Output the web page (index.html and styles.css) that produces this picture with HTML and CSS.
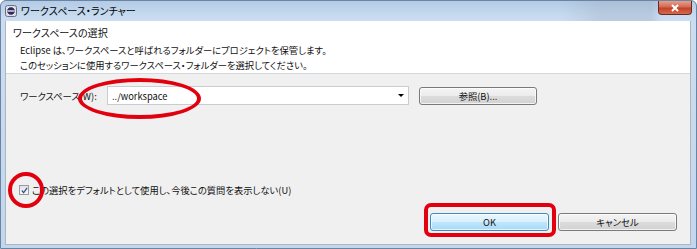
FILE: index.html
```html
<!DOCTYPE html>
<html lang="ja">
<head>
  <meta charset="UTF-8">
  <title>ワークスペース・ランチャー</title>
  <link rel="stylesheet" href="styles.css">
</head>
<body>
  <div class="window">
    <div class="titlebar">
      <svg class="app-icon" width="12" height="12" viewBox="0 0 12 12">
        <rect x="0.5" y="0.5" width="11" height="11" rx="2" fill="#d9dbe4" stroke="#6d6f80"/>
        <circle cx="6" cy="6" r="4.3" fill="#2f2a5c"/>
        <circle cx="6" cy="6" r="4.3" fill="none" stroke="#f4f4f8" stroke-width="1"/>
        <rect x="2.5" y="5.4" width="7" height="1.2" fill="#ffffff"/>
      </svg>
      <span class="title">ワークスペース・ランチャー</span>
      <div class="close-btn">
        <svg width="10" height="8" viewBox="0 0 10 8">
          <path d="M2 1 L8 7 M8 1 L2 7" stroke="#ffffff" stroke-width="2"/>
        </svg>
      </div>
    </div>

    <div class="client">
      <div class="header">
        <p class="header-title">ワークスペースの選択</p>
        <p class="header-desc">Eclipse は、ワークスペースと呼ばれるフォルダーにプロジェクトを保管します。<br>このセッションに使用するワークスペース・フォルダーを選択してください。</p>
      </div>

      <div class="body">
        <div class="ws-row">
          <span class="ws-label">ワークスペース(W):</span>
          <div class="combo">
            <span class="combo-text">../workspace</span>
            <span class="combo-arrow"></span>
          </div>
          <button class="btn browse">参照(B)...</button>
        </div>

        <label class="check-row">
          <span class="checkbox">
            <svg width="7" height="7" viewBox="0 0 8 8">
              <path d="M1 4 L3 6.5 L7 1" fill="none" stroke="#3a4f9a" stroke-width="1.4"/>
            </svg>
          </span>
          <span>この選択をデフォルトとして使用し、今後この質問を表示しない(U)</span>
        </label>

        <div class="btn-row">
          <button class="btn default">OK</button>
          <button class="btn">キャンセル</button>
        </div>
      </div>
    </div>

    <div class="mark mark-label"></div>
    <div class="mark mark-check"></div>
    <div class="mark mark-ok"></div>
  </div>
</body>
</html>
```

FILE: styles.css
```css
* { box-sizing: border-box; }
body {
  margin: 0;
  font-family: "Noto Sans CJK JP", "Noto Sans", sans-serif;
  font-size: 9.3px;
  font-feature-settings: "palt";
  color: #111;
  background: #fff;
}
p { margin: 0; }

.window {
  position: relative;
  width: 697px;
  height: 249px;
  border: 1px solid #6a84a4;
  border-radius: 6px 6px 0 0;
  background: linear-gradient(to bottom, #b3cbe5 0, #c6daef 14px, #cdddf1 22px, #c3d6eb 100%);
  display: flex;
  flex-direction: column;
}

.titlebar {
  height: 20px;
  display: flex;
  align-items: center;
  padding-left: 4px;
  background: linear-gradient(to right, rgba(255,255,255,0) 0, rgba(255,255,255,0) 560px, rgba(150,165,185,0.3) 600px, rgba(150,165,185,0.3) 650px, rgba(255,255,255,0) 660px);
}
.app-icon { flex: none; }
.title {
  margin-left: 4px;
  line-height: 14px;
  font-size: 10.1px;
  color: #000;
}
.close-btn {
  margin-left: auto;
  margin-right: 4px;
  align-self: flex-start;
  width: 34px;
  height: 14px;
  border: 1px solid #6b2a20;
  border-top: none;
  border-radius: 0 0 4px 4px;
  background: linear-gradient(to bottom, #e5a08d 0, #d46a52 45%, #c2412a 55%, #d66a4b 100%);
  display: flex;
  align-items: center;
  justify-content: center;
}

.client {
  flex: 1;
  margin: 0 5px 3px 4px;
  border: 1px solid #a9b6c4;
  border-top: none;
  background: #f0f0f0;
  display: flex;
  flex-direction: column;
}

.header {
  height: 53px;
  background: #fff;
  border-bottom: 1px solid #d5d9de;
  padding: 5px 0 0 7px;
}
.header-title {
  line-height: 14px;
  font-size: 10.1px;
}
.header-desc {
  margin: 3px 0 0 7px;
  line-height: 15px;
}

.body {
  flex: 1;
  display: flex;
  flex-direction: column;
  padding: 12px 13px 13px 13px;
}

.ws-row {
  display: flex;
  align-items: center;
  padding-left: 1px;
}
.ws-label { width: 87px; }
.combo {
  width: 302px;
  height: 19px;
  background: #fff;
  border: 1px solid #c9ccd2;
  display: flex;
  align-items: center;
  padding: 0 4px 0 4px;
}
.combo-text { flex: 1; }
.combo-arrow {
  width: 0;
  height: 0;
  border-left: 3px solid transparent;
  border-right: 3px solid transparent;
  border-top: 3px solid #000;
}

.btn {
  height: 18px;
  padding: 0;
  font: inherit;
  color: #111;
  border: 1px solid #7a7a7a;
  border-radius: 3px;
  background: linear-gradient(to bottom, #f4f4f4 0, #ececec 48%, #dcdcdc 52%, #d2d2d2 100%);
  box-shadow: inset 0 0 0 1px rgba(255,255,255,0.7);
}
.browse {
  width: 118px;
  margin-left: 10px;
}

.check-row {
  margin-top: auto;
  height: 14px;
  display: flex;
  align-items: center;
}
.checkbox {
  width: 10px;
  height: 10px;
  margin-right: 3px;
  border: 1px solid #9a9b9d;
  background: linear-gradient(to bottom, #e0e2e6, #fafafa);
  display: flex;
  align-items: center;
  justify-content: center;
}

.btn-row {
  margin-top: 16px;
  display: flex;
  justify-content: flex-end;
  gap: 9px;
}
.btn-row .btn { width: 119px; }
.btn.default {
  border-color: #3c8ac2;
  background: linear-gradient(to bottom, #eaf6fd 0, #d9f0fc 48%, #bee6fd 52%, #a7d9f5 100%);
}

.mark {
  position: absolute;
  border: 4px solid #e2000f;
  pointer-events: none;
}
.mark-label {
  left: 77px;
  top: 77px;
  width: 123px;
  height: 41px;
  border-radius: 50%;
}
.mark-check {
  left: 7px;
  top: 171px;
  width: 36px;
  height: 36px;
  border-radius: 50%;
}
.mark-ok {
  left: 423px;
  top: 202px;
  width: 132px;
  height: 34px;
  border-radius: 7px;
}
```
